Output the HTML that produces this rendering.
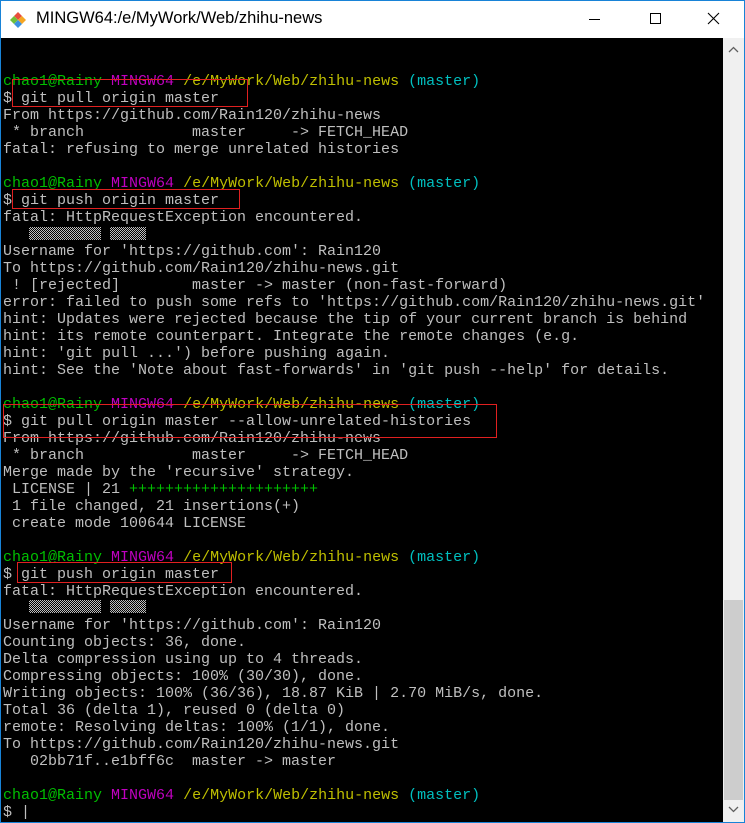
<!DOCTYPE html>
<html><head><meta charset="utf-8"><style>
*{margin:0;padding:0;box-sizing:border-box}
body{width:745px;height:823px;overflow:hidden;background:#fff;position:relative;font-family:"Liberation Sans",sans-serif}
.frame{position:absolute;left:0;top:0;width:745px;height:823px;border:1px solid #1883d7}
.title{position:absolute;left:1px;top:1px;width:743px;height:37px;background:#fff}
.title .t{position:absolute;left:35px;top:8px;font-size:16.5px;color:#000}
.term{position:absolute;left:1px;top:38px;width:722px;height:784px;background:#000}
.sb{position:absolute;left:723px;top:38px;width:21px;height:784px;background:#f0f0f0}
.thumb{position:absolute;left:1px;top:562px;width:19px;height:200px;background:#cdcdcd}
pre{position:absolute;left:3px;top:73px;font-family:"Liberation Mono",monospace;font-size:15px;line-height:17px;color:#bfbfbf;white-space:pre}
.g{color:#00bf00}.m{color:#bf00bf}.y{color:#bfbf00}.c{color:#00bfbf}
.box{position:absolute;border:1px solid #e02020}
.gar{position:absolute;height:13px;background:repeating-conic-gradient(#bfbfbf 0 25%,#000 0 50%) 0 0/2px 2px}
</style></head><body>
<div class="frame"></div>
<div class="title">
<svg style="position:absolute;left:8px;top:10px" width="18" height="18" viewBox="0 0 18 18"><path d="M9 1l4 4-4 4-4-4z" fill="#e94e3c"/><path d="M13 5l4 4-4 4-4-4z" fill="#f5a623"/><path d="M5 5l4 4-4 4-4-4z" fill="#6fbf3a"/><path d="M9 9l4 4-4 4-4-4z" fill="#3b8fe0"/></svg>
<div class="t">MINGW64:/e/MyWork/Web/zhihu-news</div>
<div style="position:absolute;left:588px;top:18px;width:11px;height:1px;background:#000"></div>
<div style="position:absolute;left:649px;top:12px;width:11px;height:11px;border:1px solid #000"></div>
<svg style="position:absolute;left:706px;top:11px" width="13" height="13"><path d="M1 1L12 12M12 1L1 12" stroke="#000" stroke-width="1.1"/></svg>
</div>
<div class="term"></div>
<div class="sb"><svg style="position:absolute;left:5px;top:8px" width="11" height="7"><path d="M1 6L5.5 1.5L10 6" stroke="#606060" fill="none" stroke-width="1.3"/></svg><div class="thumb"></div><svg style="position:absolute;left:5px;top:768px" width="11" height="7"><path d="M1 1L5.5 5.5L10 1" stroke="#606060" fill="none" stroke-width="1.3"/></svg></div>
<pre><span class="g">chao1@Rainy</span> <span class="m">MINGW64</span> <span class="y">/e/MyWork/Web/zhihu-news</span> <span class="c">(master)</span>
$ git pull origin master
From https://github.com/Rain120/zhihu-news
 * branch            master     -> FETCH_HEAD
fatal: refusing to merge unrelated histories

<span class="g">chao1@Rainy</span> <span class="m">MINGW64</span> <span class="y">/e/MyWork/Web/zhihu-news</span> <span class="c">(master)</span>
$ git push origin master
fatal: HttpRequestException encountered.

Username for 'https://github.com': Rain120
To https://github.com/Rain120/zhihu-news.git
 ! [rejected]        master -> master (non-fast-forward)
error: failed to push some refs to 'https://github.com/Rain120/zhihu-news.git'
hint: Updates were rejected because the tip of your current branch is behind
hint: its remote counterpart. Integrate the remote changes (e.g.
hint: 'git pull ...') before pushing again.
hint: See the 'Note about fast-forwards' in 'git push --help' for details.

<span class="g">chao1@Rainy</span> <span class="m">MINGW64</span> <span class="y">/e/MyWork/Web/zhihu-news</span> <span class="c">(master)</span>
$ git pull origin master --allow-unrelated-histories
From https://github.com/Rain120/zhihu-news
 * branch            master     -> FETCH_HEAD
Merge made by the 'recursive' strategy.
 LICENSE | 21 <span class="g">+++++++++++++++++++++</span>
 1 file changed, 21 insertions(+)
 create mode 100644 LICENSE

<span class="g">chao1@Rainy</span> <span class="m">MINGW64</span> <span class="y">/e/MyWork/Web/zhihu-news</span> <span class="c">(master)</span>
$ git push origin master
fatal: HttpRequestException encountered.

Username for 'https://github.com': Rain120
Counting objects: 36, done.
Delta compression using up to 4 threads.
Compressing objects: 100% (30/30), done.
Writing objects: 100% (36/36), 18.87 KiB | 2.70 MiB/s, done.
Total 36 (delta 1), reused 0 (delta 0)
remote: Resolving deltas: 100% (1/1), done.
To https://github.com/Rain120/zhihu-news.git
   02bb71f..e1bff6c  master -> master

<span class="g">chao1@Rainy</span> <span class="m">MINGW64</span> <span class="y">/e/MyWork/Web/zhihu-news</span> <span class="c">(master)</span>
$ |</pre>
<div class="gar" style="left:29px;top:227px;width:72px"></div>
<div class="gar" style="left:110px;top:227px;width:36px"></div>
<div class="gar" style="left:29px;top:600px;width:72px"></div>
<div class="gar" style="left:110px;top:600px;width:36px"></div>
<div class="box" style="left:12px;top:79px;width:236px;height:28px"></div>
<div class="box" style="left:12px;top:189px;width:228px;height:20px"></div>
<div class="box" style="left:3px;top:404px;width:494px;height:34px"></div>
<div class="box" style="left:17px;top:562px;width:215px;height:21px"></div>
</body></html>
